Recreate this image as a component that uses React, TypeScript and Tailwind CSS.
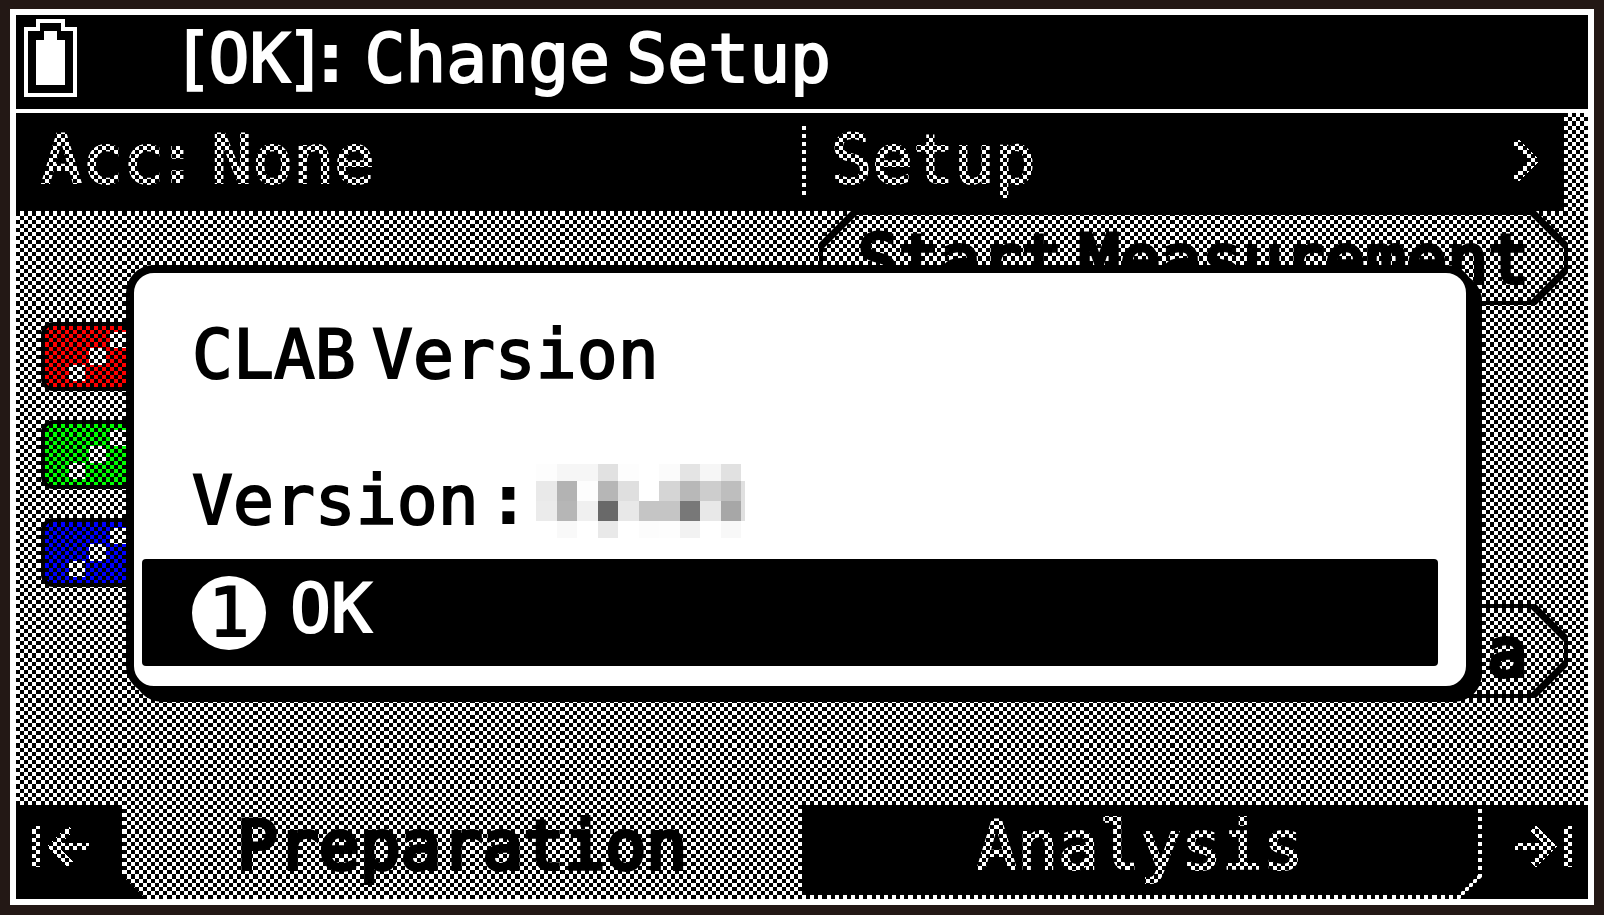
import React from 'react';

const COLS = 384;
const ROWS = 216;
const HEADER_ROWS = 24;

const channels = [
  { name: 'Channel 1', color: 'bg-[#ff0000]' },
  { name: 'Channel 2', color: 'bg-[#00ff00]' },
  { name: 'Channel 3', color: 'bg-[#0000ff]' },
];

// Grey levels of the hidden version number, one row per line of blocks
const mosaic = [
  ['#fdfdfd', '#f6f6f6', '#f6f6f6', '#e1e1e1', '#fdfdfd', '#ffffff', '#fbfbfb', '#e4e4e4', '#f6f6f6', '#e1e1e1'],
  ['#e9e9e9', '#b3b3b3', '#fdfdfd', '#b6b6b6', '#dfdfdf', '#ffffff', '#d5d5d5', '#b8b8b8', '#cdcdcd', '#bebebe'],
  ['#ebebeb', '#b6b6b6', '#f0f0f0', '#696969', '#e8e8e8', '#c5c5c5', '#c5c5c5', '#787878', '#e8e8e8', '#a7a7a7'],
  ['#ffffff', '#f9f9f9', '#ffffff', '#e9e9e9', '#ffffff', '#fcfcfc', '#fdfdfd', '#f2f2f2', '#ffffff', '#f8f8f8'],
];
const mosaicY = [0, 17, 37, 57, 74];

// Letters are monospaced, spaces and punctuation are narrow
const Label = ({ text }: { text: string }) => (
  <span className="whitespace-pre">
    {text.split(/([ :[\]])/).filter(Boolean).map((part, index) => {
      if (part === ' ') {
        return <span key={index} className="text-[27px] leading-none"> </span>;
      }
      if (part === ':') {
        return (
          <span key={index} className="pr-1 font-['DejaVu_Sans',sans-serif] leading-none font-bold [-webkit-text-stroke:0px]">
            :
          </span>
        );
      }
      if (part === '[' || part === ']') {
        return <span key={index} className="font-['DejaVu_Sans',sans-serif] leading-none">{part}</span>;
      }
      return <span key={index}>{part}</span>;
    })}
  </span>
);

// Checkerboard laid over everything that is disabled behind the dialog
const Dither = () => {
  let even = '';
  let odd = '';
  for (let row = HEADER_ROWS; row < ROWS; row++) {
    if (row % 2 === 0) {
      even += `M0 ${row + 0.5}H${COLS}`;
    } else {
      odd += `M1 ${row + 0.5}H${COLS}`;
    }
  }
  return (
    <svg
      className="pointer-events-none absolute inset-0 h-full w-full"
      viewBox={`0 0 ${COLS} ${ROWS}`}
      preserveAspectRatio="none"
      shapeRendering="crispEdges"
      stroke="#000"
      strokeWidth="1"
      strokeDasharray="1 1"
      aria-hidden="true"
    >
      <path d={even} />
      <path d={odd} />
    </svg>
  );
};

const Battery = () => (
  <svg width="53" height="78" viewBox="0 0 13 19" shapeRendering="crispEdges" fill="#fff" aria-hidden="true">
    <path fillRule="evenodd" d="M3 0h7v2h3v17H0V2h3zM4 1v2H1v15h11V3H9V1z" />
    <path d="M5 3h3v2h2v11H3V5h2z" />
  </svg>
);

const PillButton = ({ text, align }: { text: string; align: string }) => (
  <button
    type="button"
    className="h-[94px] w-full bg-black p-1 [clip-path:polygon(32px_0,calc(100%-32px)_0,100%_32px,100%_calc(100%-32px),calc(100%-32px)_100%,32px_100%,0_calc(100%-32px),0_32px)]"
  >
    <span
      className={`flex h-full items-center bg-white px-9 pt-1 text-black [-webkit-text-stroke:4px] [clip-path:polygon(34px_0,calc(100%-34px)_0,100%_34px,100%_calc(100%-34px),calc(100%-34px)_100%,34px_100%,0_calc(100%-34px),0_34px)] ${align}`}
    >
      <Label text={text} />
    </span>
  </button>
);

const ChannelIcon = ({ name, color }: { name: string; color: string }) => (
  <button
    type="button"
    aria-label={name}
    className={`flex h-[69px] w-[112px] items-center rounded-xl border-4 border-black pl-6 ${color}`}
  >
    <svg width="57" height="49" viewBox="0 0 14 12" shapeRendering="crispEdges" fill="#fff" aria-hidden="true">
      <path d="M0 8h4v4H0zM5 4h4v4H5zM10 0h4v4h-4z" />
    </svg>
  </button>
);

const App = () => {
  return (
    <div className="flex min-h-screen flex-col bg-[#231815] px-2.5 pt-[9px] pb-2.5 font-['DejaVu_Sans_Mono',monospace] text-[68px] leading-[80px] [-webkit-text-stroke:2px]">
      <div className="relative flex grow flex-col overflow-hidden border-[6px] border-white bg-white">
        <header className="flex h-[98px] items-start border-b-4 border-white bg-black pt-1 pl-2 text-white">
          <Battery />
          <h1 className="pl-[105px]">
            <Label text="[OK]: Change Setup" />
          </h1>
        </header>

        <div className="mr-6 flex h-[98px] items-center bg-black text-white">
          <button type="button" className="flex-1 pb-1 pl-[25px] text-left">
            <Label text="Acc: None" />
          </button>
          <div className="mb-1 h-[70px] w-1 bg-white" />
          <button type="button" className="flex w-[758px] items-center justify-between pr-[25px] pb-1 pl-[25px] text-left">
            <Label text="Setup" />
            <svg width="25" height="41" viewBox="0 0 6 10" shapeRendering="crispEdges" fill="none" stroke="#fff" strokeWidth="1.8" aria-hidden="true">
              <path d="M0 0L5 5L0 10" />
            </svg>
          </button>
        </div>

        <main className="flex grow justify-between pr-5 pl-[25px]">
          <div className="flex flex-col gap-[29px] pt-[111px]">
            {channels.map((channel) => (
              <ChannelIcon key={channel.name} name={channel.name} color={channel.color} />
            ))}
          </div>
          <div className="flex w-[749px] flex-col gap-[299px]">
            <PillButton text="Start Measurement" align="justify-center" />
            <PillButton text="a" align="justify-end" />
          </div>
        </main>

        <nav className="grid h-[94px] grid-cols-[106px_1fr_1fr_106px] bg-black text-white">
          <button type="button" aria-label="First" className="flex items-center pb-3 pl-4">
            <svg width="57" height="41" viewBox="0 0 14 10" shapeRendering="crispEdges" fill="none" stroke="#fff" strokeWidth="1.8" aria-hidden="true">
              <path d="M1 0V10M9.5 0.5L5 5L9.5 9.5M5 5H14" />
            </svg>
          </button>
          <button
            type="button"
            className="bg-white pb-3 text-black [-webkit-text-stroke:4px] [clip-path:polygon(0_0,100%_0,100%_100%,24px_100%,0_calc(100%-24px))]"
          >
            <Label text="Preparation" />
          </button>
          <button
            type="button"
            className="bg-white pr-1 pb-1 [clip-path:polygon(0_0,100%_0,100%_calc(100%-22px),calc(100%-22px)_100%,0_100%)]"
          >
            <span className="flex h-full items-center justify-center bg-black pb-2 [clip-path:polygon(0_0,100%_0,100%_calc(100%-20px),calc(100%-20px)_100%,0_100%)]">
              <Label text="Analysis" />
            </span>
          </button>
          <button type="button" aria-label="Last" className="flex items-center justify-end pr-4 pb-3">
            <svg width="57" height="41" viewBox="0 0 14 10" shapeRendering="crispEdges" fill="none" stroke="#fff" strokeWidth="1.8" aria-hidden="true">
              <path d="M13 0V10M4.5 0.5L9 5L4.5 9.5M0 5H9" />
            </svg>
          </button>
        </nav>

        <Dither />

        <section
          role="dialog"
          aria-labelledby="dialog-title"
          className="absolute top-[250px] right-[114px] left-[110px] rounded-[28px] border-8 border-black bg-white pt-[42px] pb-5 text-black shadow-[8px_8px_0_#000]"
        >
          <h2 id="dialog-title" className="pl-[58px]">
            <Label text="CLAB Version" />
          </h2>
          <p className="mt-[66px] flex items-center pl-[58px]">
            <Label text="Version :" />
            <svg className="ml-2.5" width="209" height="74" viewBox="0 0 209 74" shapeRendering="crispEdges" aria-hidden="true">
              {mosaic.map((line, row) =>
                line.map((fill, col) => (
                  <rect
                    key={`${row}-${col}`}
                    x={col * 20.5}
                    y={mosaicY[row]}
                    width="20.5"
                    height={mosaicY[row + 1] - mosaicY[row]}
                    fill={fill}
                  />
                ))
              )}
              <path d="M205 17h4v40h-4z" fill="#e0e0e0" />
            </svg>
          </p>
          <button
            type="button"
            className="mt-[18px] mr-7 ml-2 flex h-[107px] w-[calc(100%-36px)] items-center gap-6 rounded bg-black pl-[50px] text-white"
          >
            <span className="flex size-[74px] items-center justify-center rounded-full bg-white text-black">1</span>
            <span className="pb-2">
              <Label text="OK" />
            </span>
          </button>
        </section>
      </div>
    </div>
  );
};

export default App;
